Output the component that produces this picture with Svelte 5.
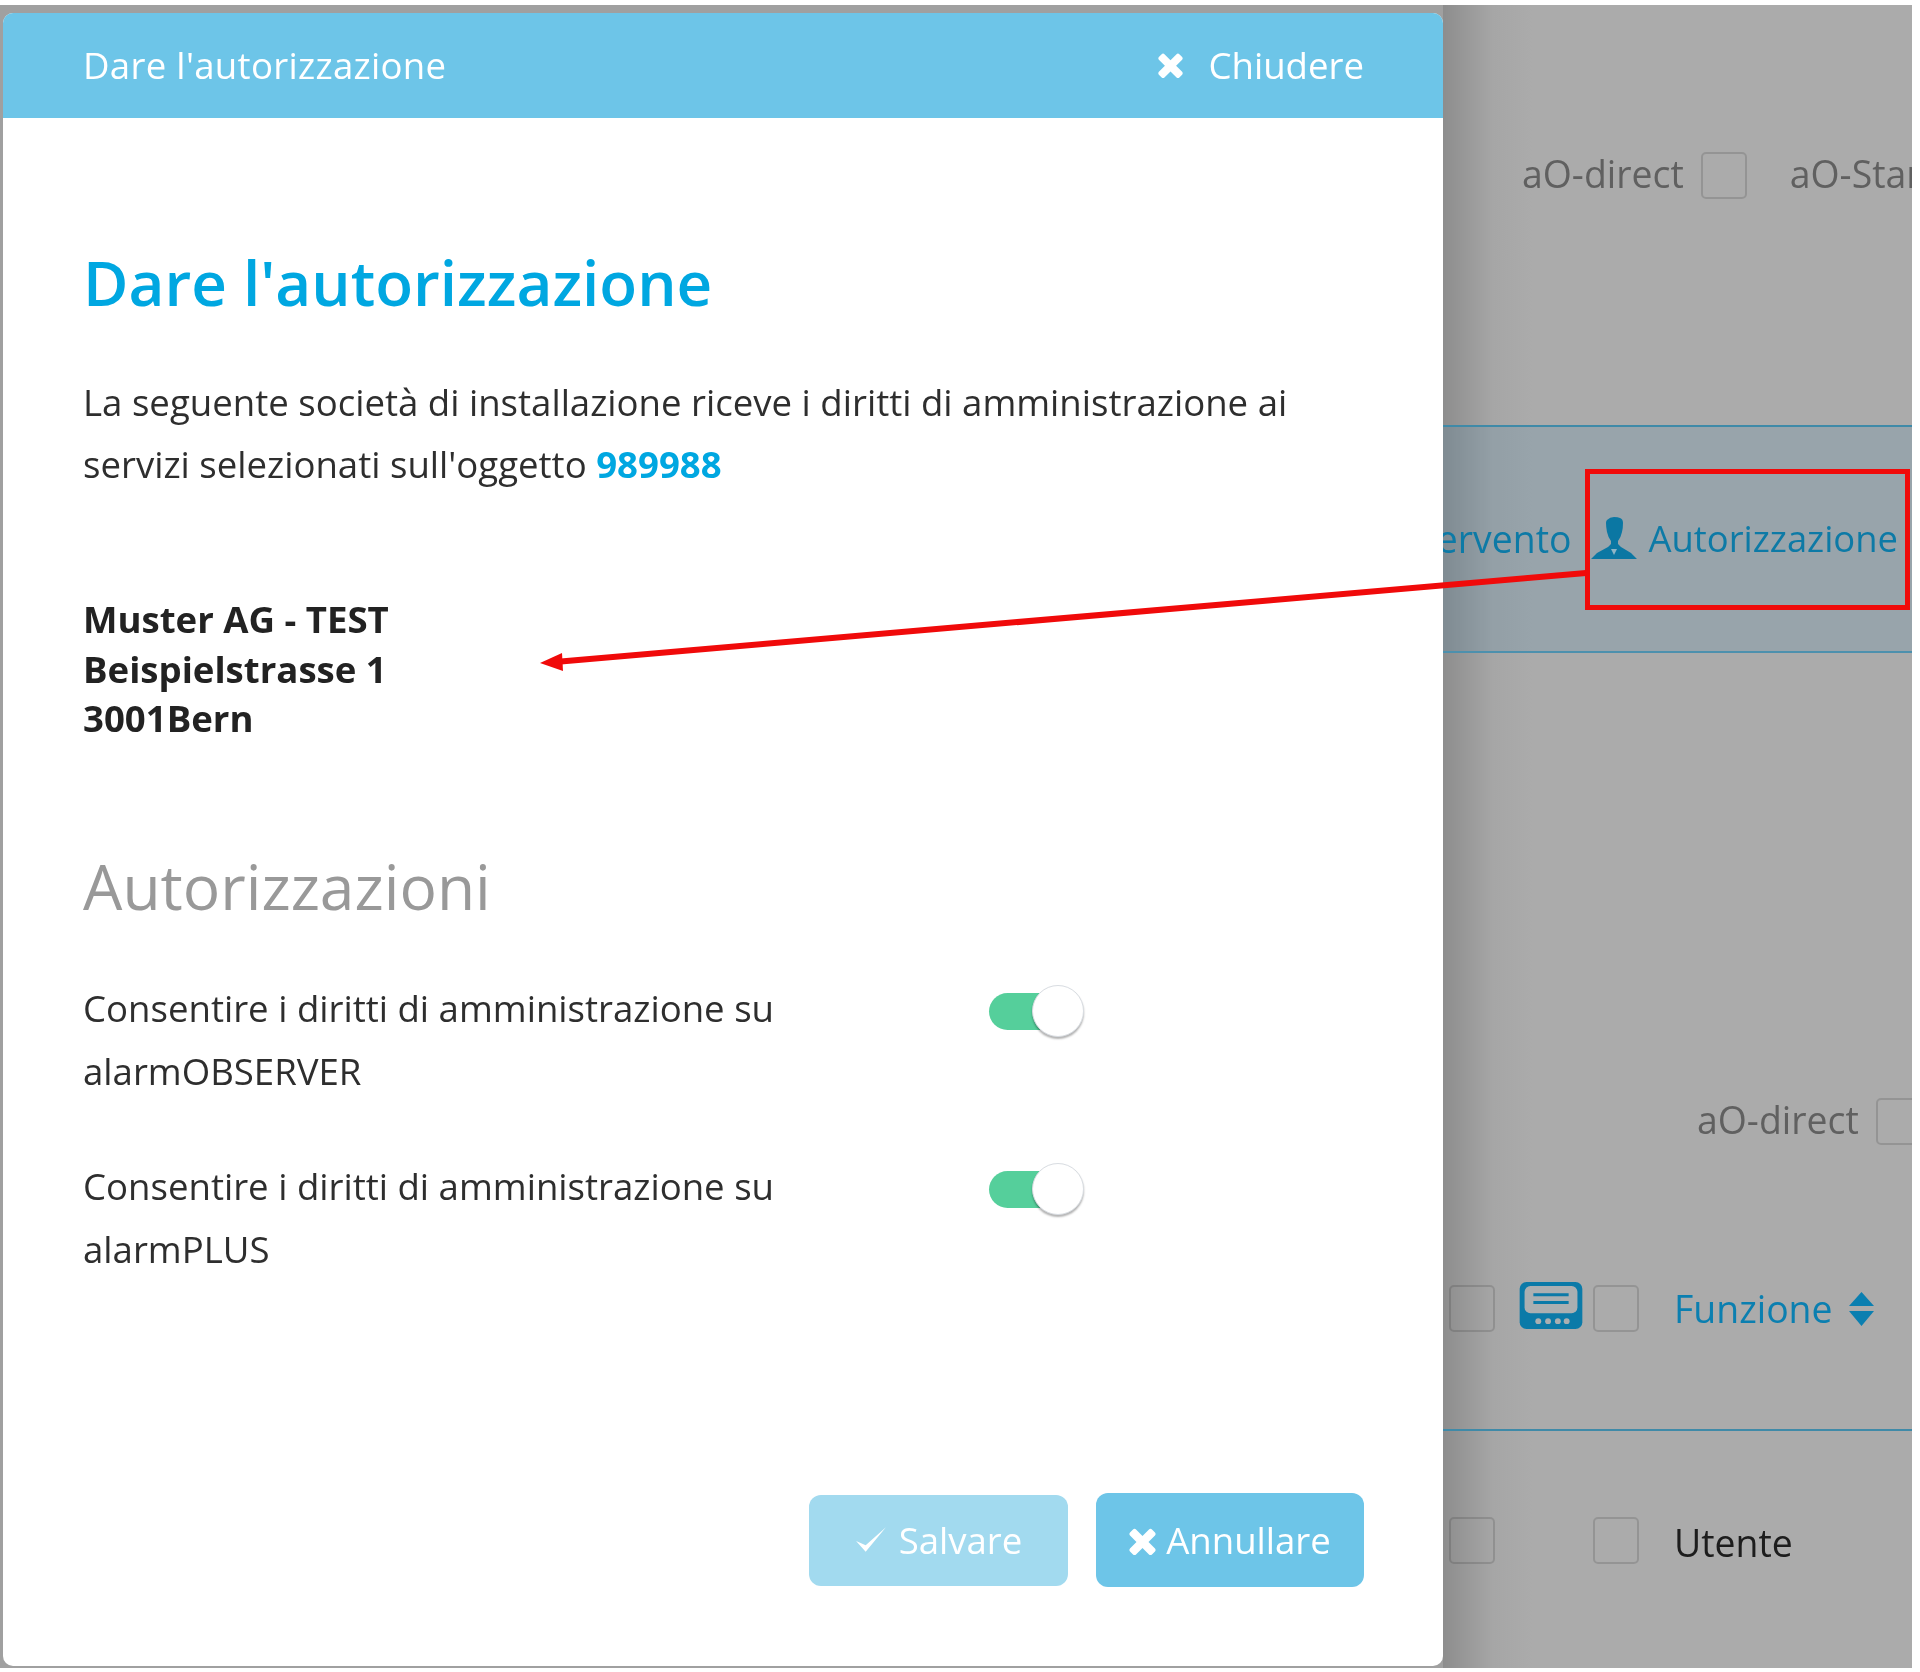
<script lang="ts">
	const rights = [
		{ service: 'alarmOBSERVER' },
		{ service: 'alarmPLUS' }
	];
	const closePath =
		'M1490 1322q0 40-28 68l-136 136q-28 28-68 28t-68-28l-294-294-294 294q-28 28-68 28t-68-28l-136-136q-28-28-28-68t28-68l294-294-294-294q-28-28-28-68t28-68l136-136q28-28 68-28t68 28l294 294 294-294q28-28 68-28t68 28l136 136q28 28 28 68t-28 68l-294 294 294 294q28 28 28 68z';
</script>

<div class="page">
	<section class="modal">
		<header class="modal-head">
			<span class="head-title">Dare l'autorizzazione</span>
			<span class="close">
				<svg class="x" viewBox="302 240 1188 1314"><path d={closePath} /></svg>
				Chiudere
			</span>
		</header>

		<div class="modal-body">
			<h1>Dare l'autorizzazione</h1>
			<p class="intro">
				La seguente società di installazione riceve i diritti di amministrazione ai<br />
				servizi selezionati sull'oggetto <strong>989988</strong>
			</p>
			<address>
				Muster AG - TEST<br />
				Beispielstrasse 1<br />
				3001Bern
			</address>
			<h2>Autorizzazioni</h2>
			<div class="rights">
				{#each rights as right}
					<div class="right-row">
						<p>Consentire i diritti di amministrazione su<br />{right.service}</p>
						<span class="toggle"><span class="knob"></span></span>
					</div>
				{/each}
			</div>
			<footer>
				<button class="btn save">
					<svg class="check" viewBox="0 0 30 26"><path d="M1 14l9 10L29 1 10 18z" /></svg>
					Salvare
				</button>
				<button class="btn cancel">
					<svg class="x small" viewBox="302 240 1188 1314"><path d={closePath} /></svg>
					Annullare
				</button>
			</footer>
		</div>
	</section>

	<aside class="behind">
		<div class="top">
			<span>aO-direct</span>
			<i class="box"></i>
			<span class="second">aO-Standard</span>
		</div>
		<div class="band">
			<span>Intervento</span>
			<svg class="person" viewBox="0 0 46 42">
				<path d="M16 3q3-3 7-3t6 1q3 1 3 5 0 5-1 9-1 5-4 9v3l3 3 10 6 6 6H0l6-6 11-6 3-3v-3q-3-4-4-9-1-5-1-9 0-2 1-3z" />
				<path class="tie" d="M20 32h6l-3 6z" />
			</svg>
			<span class="auth">Autorizzazione</span>
		</div>
		<div class="middle">
			<div class="direct">
				<span>aO-direct</span>
				<i class="box"></i>
			</div>
			<div class="cols head-row">
				<i class="box"></i>
				<svg class="device" viewBox="0 0 64 48">
					<rect width="64" height="48" rx="7" fill="#0b7aa8" />
					<rect x="5" y="4" width="54" height="28" rx="6" fill="#abafb1" />
					<path d="M14 13h36M14 21h36" stroke="#0b7aa8" stroke-width="3" />
					<g fill="#abafb1">
						<circle cx="19" cy="40" r="3" />
						<circle cx="29" cy="40" r="3" />
						<circle cx="39" cy="40" r="3" />
						<circle cx="48" cy="40" r="3" />
					</g>
				</svg>
				<i class="box"></i>
				<span class="fn">
					Funzione
					<svg class="sort" viewBox="0 0 25 34"><path d="M12.5 0L25 14H0zM0 19h25L12.5 34z" /></svg>
				</span>
			</div>
		</div>
		<div class="cols last-row">
			<i class="box"></i>
			<span></span>
			<i class="box"></i>
			<span class="user">Utente</span>
		</div>
	</aside>

	<!-- annotation drawn over the screenshot -->
	<div class="red-box"></div>
	<svg class="arrow" viewBox="0 0 1920 1672">
		<path d="M1586 573L555 662" stroke="#f00a0a" stroke-width="6" fill="none" />
		<path d="M540 663l22-10 1 18z" fill="#f00a0a" />
	</svg>
</div>

<style>
	:global(body) {
		margin: 0;
		background: #fff;
	}

	.page {
		position: relative;
		display: flex;
		box-sizing: border-box;
		width: 1912px;
		height: 1663px;
		margin-top: 5px;
		padding-left: 3px;
		overflow: hidden;
		background: #a0a0a0;
		font-family: 'Open Sans', 'Noto Sans', sans-serif;
		font-size: 36.6px;
		filter: blur(0.6px);
	}

	.modal {
		display: flex;
		flex-direction: column;
		flex: none;
		width: 1440px;
		margin: 8px 0 2px;
		background: #fff;
		border-radius: 10px;
		color: #2e2e2e;
	}

	.modal-head {
		display: flex;
		flex: none;
		align-items: center;
		justify-content: space-between;
		box-sizing: border-box;
		height: 105px;
		padding: 0 79px 2px 80px;
		background: #6dc5e8;
		border-radius: 10px 10px 0 0;
		color: #fff;
	}

	.head-title {
		letter-spacing: 0.3px;
	}

	.close {
		display: flex;
		align-items: center;
		gap: 25px;
	}

	.x {
		width: 25px;
		height: 27px;
		fill: #fff;
	}

	.x.small {
		width: 27px;
		height: 29px;
	}

	.modal-body {
		display: flex;
		flex: 1;
		flex-direction: column;
		padding: 128px 79px 79px 80px;
	}

	h1 {
		margin: 0;
		color: #00a7e1;
		font-size: 62px;
		font-weight: 600;
		line-height: 72px;
	}

	.intro {
		margin: 53px 0 0;
		line-height: 62px;
	}

	.intro strong {
		color: #00a7e1;
		font-weight: 700;
	}

	address {
		margin-top: 100px;
		color: #222;
		font-style: normal;
		font-weight: 700;
		line-height: 49.5px;
	}

	h2 {
		margin: 106px 0 0;
		color: #999;
		font-size: 62.3px;
		font-weight: 400;
		line-height: 72px;
	}

	.rights {
		display: flex;
		flex-direction: column;
		gap: 52px;
		margin-top: 55px;
	}

	.right-row {
		display: flex;
		align-items: flex-start;
	}

	.right-row p {
		flex: none;
		width: 906px;
		margin: 0;
		line-height: 63px;
	}

	.toggle {
		position: relative;
		display: block;
		width: 95px;
		height: 37px;
		margin-top: 16px;
		background: linear-gradient(to right, #55cf9b 70%, transparent 70%);
		border-radius: 19px 0 0 19px;
	}

	.knob {
		position: absolute;
		top: -8px;
		right: 0;
		box-sizing: border-box;
		width: 52px;
		height: 52px;
		background: #fff;
		border: 1px solid #d9dde2;
		border-radius: 50%;
		box-shadow: 0 2px 2px rgba(0, 0, 0, 0.3);
	}

	footer {
		display: flex;
		align-items: center;
		justify-content: flex-end;
		gap: 28px;
		margin-top: auto;
	}

	.btn {
		display: flex;
		align-items: center;
		justify-content: center;
		border: 0;
		border-radius: 12px;
		color: #fff;
		font: inherit;
	}

	.save {
		gap: 12px;
		width: 259px;
		height: 91px;
		background: #a2daef;
	}

	.check {
		width: 32px;
		height: 28px;
		fill: #fff;
	}

	.cancel {
		gap: 10px;
		width: 268px;
		height: 94px;
		background: #6dc5e8;
	}

	.behind {
		position: relative;
		display: flex;
		flex: 1;
		flex-direction: column;
		min-width: 0;
		background: linear-gradient(to right, #8d8d8d, #a6a6a6 50px, #ababab 90px);
		color: #606060;
		font-size: 37.4px;
	}

	.box {
		display: block;
		flex: none;
		box-sizing: border-box;
		width: 46px;
		height: 47px;
		border: 2px solid rgba(0, 0, 0, 0.13);
		border-radius: 5px;
	}

	.top {
		display: flex;
		flex: none;
		align-items: center;
		box-sizing: border-box;
		height: 420px;
		padding: 0 0 84px 79px;
		overflow: hidden;
		white-space: nowrap;
	}

	.top .box {
		margin: 5px 0 0 17px;
	}

	.second {
		margin-left: 43px;
	}

	.band {
		display: flex;
		flex: none;
		align-items: center;
		justify-content: flex-end;
		box-sizing: border-box;
		height: 228px;
		padding: 0 14px 2px 0;
		overflow: hidden;
		background: rgba(60, 130, 170, 0.17);
		border-top: 2px solid #3f8aa8;
		border-bottom: 2px solid #4d90ad;
		color: #0d7aa6;
		white-space: nowrap;
	}

	.auth {
		font-size: 36.4px;
	}

	.person {
		flex: none;
		width: 46px;
		height: 42px;
		margin: 0 12px 0 19px;
		fill: #0b77a3;
	}

	.person .tie {
		fill: #8fb5c6;
	}

	.middle {
		flex: none;
		height: 778px;
		box-sizing: border-box;
		border-bottom: 2px solid #3f8aa8;
	}

	.direct {
		display: flex;
		align-items: center;
		gap: 17px;
		height: 47px;
		margin-top: 445px;
		padding-left: 254px;
		white-space: nowrap;
	}

	.direct span {
		margin-bottom: 5px;
	}

	.cols {
		display: grid;
		grid-template-columns: 70px 74px 81px auto;
		align-items: center;
		padding-left: 6px;
	}

	.head-row {
		margin-top: 138px;
		color: #0b7fb0;
	}

	.device {
		width: 64px;
		height: 47px;
		margin-top: -6px;
	}

	.fn {
		display: flex;
		align-items: center;
		gap: 16px;
		white-space: nowrap;
	}

	.sort {
		width: 25px;
		height: 34px;
		fill: #0b7fb0;
	}

	.last-row {
		margin-top: 82px;
	}

	.user {
		margin-top: 4px;
		color: #1d1d1d;
	}

	.red-box {
		position: absolute;
		top: 464px;
		left: 1585px;
		box-sizing: border-box;
		width: 325px;
		height: 141px;
		border: 5px solid #f00a0a;
	}

	.arrow {
		position: absolute;
		top: -5px;
		left: 0;
		width: 1920px;
		height: 1672px;
		pointer-events: none;
	}
</style>
